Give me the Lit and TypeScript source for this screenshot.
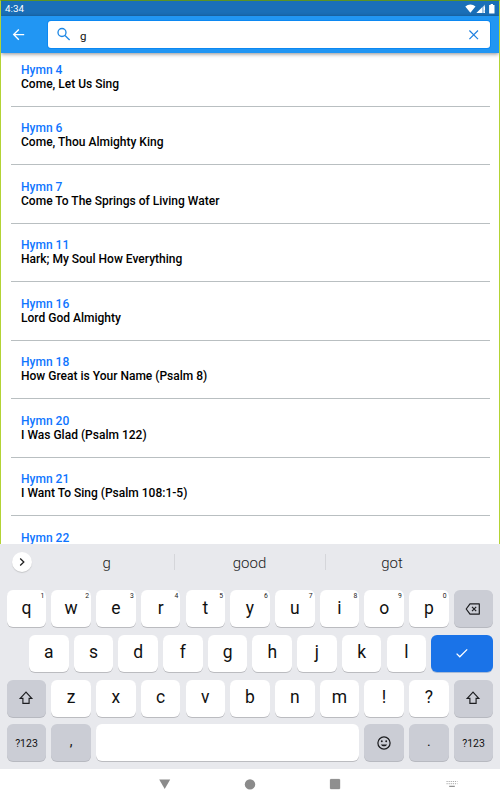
import { LitElement, html, css, svg, nothing } from "lit";
import { customElement, property } from "lit/decorators.js";
import { classMap } from "lit/directives/class-map.js";

const hymns: Array<[number, string]> = [
  [4, "Come, Let Us Sing"],
  [6, "Come, Thou Almighty King"],
  [7, "Come To The Springs of Living Water"],
  [11, "Hark; My Soul How Everything"],
  [16, "Lord God Almighty"],
  [18, "How Great is Your Name (Psalm 8)"],
  [20, "I Was Glad (Psalm 122)"],
  [21, "I Want To Sing (Psalm 108:1-5)"],
  [22, ""],
];

const shiftIcon = svg`<svg width="16" height="16" viewBox="0 0 16 16" fill="none" stroke="#1c1d20" stroke-width="1.15"><path d="M8 2.2 2.2 8.3H4.9v5.1h6.2V8.3h2.7z"/></svg>`;
const deleteIcon = svg`<svg width="16" height="16" viewBox="0 0 16 16" fill="none" stroke="#1c1d20" stroke-width="1.2"><path d="M5 2.9h9.3v10.2H5L1.2 8z" stroke-linejoin="round"/><path d="m7 5.9 4.2 4.2m0-4.2L7 10.1"/></svg>`;
const doneIcon = svg`<svg width="16" height="16" viewBox="0 0 16 16" fill="none" stroke="#fff" stroke-width="1.3"><path d="m2.6 8.6 3.2 3.2 7.4-7.4"/></svg>`;
const smileIcon = svg`<svg width="16" height="16" viewBox="0 0 16 16" fill="none" stroke="#1c1d20" stroke-width="1.25"><circle cx="8" cy="8" r="6.1"/><path d="M4.9 9.4c1.2 2.5 5 2.5 6.2 0z" fill="#1c1d20" stroke="none"/><circle cx="5.8" cy="6.3" r=".95" fill="#1c1d20" stroke="none"/><circle cx="10.2" cy="6.3" r=".95" fill="#1c1d20" stroke="none"/></svg>`;

@customElement("key-cap")
class KeyCap extends LitElement {
  @property() label = "";
  @property() hint = "";
  @property() icon = "";
  static styles = css`
    :host {
      position: relative;
      display: flex;
      align-items: center;
      justify-content: center;
      box-sizing: border-box;
      height: 37px;
      border-radius: 6px;
      background: #fff;
      box-shadow: 0 1px 0 #bbbcc0;
      color: #111;
      font: 400 17.5px/20px Roboto, sans-serif;
    }
    :host([dark]) { background: #cbcdd5; box-shadow: 0 1px 0 #b7b9c0; }
    :host([done]) { background: #1a73e8; box-shadow: 0 1px 0 #a9bbd6; }
    .label { margin-top: -2px; }
    .mark { font-size: 14px; margin-top: -4px; }
    .small { font-size: 10.5px; margin-top: 2px; }
    .hint { position: absolute; right: 2px; top: 1.5px; font-size: 6.8px; line-height: 8px; color: #222; }
    svg { display: block; margin-right: 1px; }
  `;
  render() {
    const icons: Record<string, unknown> = { shift: shiftIcon, del: deleteIcon, done: doneIcon, smile: smileIcon };
    const mark = this.label === "," || this.label === ".";
    return html`
      ${this.icon ? icons[this.icon] : html`<span class=${classMap({ label: this.label.length === 1 && !mark, mark, small: this.label.length > 1 })}>${this.label}</span>`}
      ${this.hint ? html`<span class="hint">${this.hint}</span>` : nothing}
    `;
  }
}

@customElement("soft-keyboard")
class SoftKeyboard extends LitElement {
  static styles = css`
    :host { display: block; height: 225px; background: #e8e9ed; font-family: Roboto, sans-serif; }
    .suggestions { height: 46px; display: flex; align-items: flex-start; padding: 0 37px 0 12px; box-sizing: border-box; }
    .more { width: 20px; height: 20px; margin-top: 8px; border-radius: 50%; background: #fff; box-shadow: 0 1px 1px #c6c7ca; display: flex; align-items: center; justify-content: center; }
    .word { margin-top: 9px; text-align: center; font: 300 15px/20px Roboto, sans-serif; color: #222; }
    .first { flex: 0 0 141.5px; box-sizing: border-box; padding-left: 8px; }
    .second { flex: 0 0 150px; }
    .third { flex: 0 0 133px; }
    .bar { width: 1px; height: 16px; margin-top: 10px; background: #d5d6da; }
    .keys { display: flex; flex-direction: column; row-gap: 7.8px; padding: 0 6.7px; }
    .row { display: flex; gap: 5.1px; height: 37px; }
    key-cap { flex: 1 1 0; }
    .second-row { padding-left: 22.35px; }
    .second-row key-cap, .last-row key-cap { flex: 0 0 39.6px; }
    .second-row .enter, .last-row .space { flex: 1 1 0; }
  `;
  render() {
    return html`
      <div class="suggestions">
        <div class="more"><svg width="12" height="12" viewBox="0 0 12 12" fill="none" stroke="#222" stroke-width="1.3"><path d="m4.2 2.5 3.6 3.5-3.6 3.5"/></svg></div>
        <div class="word first">g</div>
        <div class="bar"></div>
        <div class="word second">good</div>
        <div class="bar"></div>
        <div class="word third">got</div>
      </div>
      <div class="keys">
        <div class="row">
          ${[..."qwertyuiop"].map((k, i) => html`<key-cap label=${k} hint=${String((i + 1) % 10)}></key-cap>`)}
          <key-cap dark icon="del"></key-cap>
        </div>
        <div class="row second-row">
          ${[..."asdfghjkl"].map((k) => html`<key-cap label=${k}></key-cap>`)}
          <key-cap class="enter" done icon="done"></key-cap>
        </div>
        <div class="row">
          <key-cap dark icon="shift"></key-cap>
          ${[..."zxcvbnm!?"].map((k) => html`<key-cap label=${k}></key-cap>`)}
          <key-cap dark icon="shift"></key-cap>
        </div>
        <div class="row last-row">
          <key-cap dark label="?123"></key-cap>
          <key-cap dark label=","></key-cap>
          <key-cap class="space"></key-cap>
          <key-cap dark icon="smile"></key-cap>
          <key-cap dark label="."></key-cap>
          <key-cap dark label="?123"></key-cap>
        </div>
      </div>
    `;
  }
}

@customElement("app-root")
class AppRoot extends LitElement {
  static styles = css`
    :host { display: flex; flex-direction: column; width: 500px; height: 800px; overflow: hidden; background: #fff; font-family: Roboto, sans-serif; }
    .app { height: 544px; box-sizing: border-box; border: 1px solid #b3d335; border-top-color: #5b9324; border-bottom: 0; display: flex; flex-direction: column; overflow: hidden; }
    .status { flex: none; height: 15px; background: #1a6fb8; color: #fff; display: flex; align-items: center; justify-content: space-between; padding: 0 3px 0 4px; font-size: 9.8px; line-height: 14px; }
    .status svg { display: block; }
    .header { flex: none; height: 37px; background: #2196f3; display: flex; align-items: center; box-sizing: border-box; padding: 0 9.5px 0 10px; box-shadow: 0 1px 4px rgba(0, 0, 0, .45); z-index: 1; }
    .back { width: 16px; margin-right: 21px; display: block; }
    .field { flex: 1; height: 27px; box-sizing: border-box; background: #fff; border-radius: 3px; display: flex; align-items: center; padding: 0 9px; box-shadow: 0 0 0 1px #0c88f2; }
    .query { flex: 1; margin-left: 8px; font-size: 11.5px; line-height: 14px; color: #111; padding-top: 2px; }
    .list { flex: 1; min-height: 0; overflow: hidden; padding: 0 9.5px; margin-top: -5px; }
    .item { height: 58.5px; box-sizing: border-box; border-bottom: 1px solid #b9bfc1; padding: 14.7px 0 0 10.5px; font-size: 12.03px; line-height: 14px; font-weight: 500; color: #000; white-space: nowrap; }
    .number { color: #0f75ff; }
    .nav { flex: 1; display: flex; align-items: center; padding: 0 42px 2px 158px; }
    .nav svg { display: block; }
    .circle { margin-left: 71px; }
    .square { margin-left: 71px; }
    .board { margin-left: auto; }
  `;
  render() {
    return html`
      <div class="app">
        <div class="status">
          <span>4:34</span>
          <svg width="31" height="12" viewBox="0 0 31 12" fill="#fff">
            <path d="M.3 3.6C3.4.9 7.4.9 10.5 3.6L5.4 9.8z"/>
            <path d="M20 1.5v8.5h-8.5z" fill-opacity=".6"/><path d="M17 4.5V10h-5.5z"/><path d="M18.7 3.5h1.3v4h-1.3zM18.7 8.6h1.3V10h-1.3z"/>
            <path d="M25.6 1.1h2.4v1h1.5v8.3h-5.4V2.1h1.5z"/>
          </svg>
        </div>
        <div class="header">
          <svg class="back" width="16" height="16" viewBox="0 0 16 16" fill="none" stroke="#fff" stroke-width="1.35"><path d="M13.2 7.6H2.6M7.8 2.5 2.7 7.6l5.1 5.1"/></svg>
          <div class="field">
            <svg width="15" height="15" viewBox="0 0 15 15" fill="none" stroke="#1e88e5" stroke-width="1.35"><circle cx="5" cy="5.5" r="4"/><path d="m8 8.5 4.6 4.5"/></svg>
            <span class="query">g</span>
            <svg width="14" height="14" viewBox="0 0 14 14" fill="none" stroke="#1e80e0" stroke-width="1.2"><path d="m2.4 2.5 8.6 8.6m0-8.6-8.6 8.6"/></svg>
          </div>
        </div>
        <div class="list">
          ${hymns.map(([n, title]) => html`<div class="item"><div class="number">Hymn ${n}</div><div>${title}</div></div>`)}
        </div>
      </div>
      <soft-keyboard></soft-keyboard>
      <div class="nav">
        <svg width="13" height="12" viewBox="0 0 13 12" fill="#8b8b8b"><path d="M1.2 1.4h11L6.7 11z"/></svg>
        <svg class="circle" width="16" height="12" viewBox="0 0 16 12" fill="#8b8b8b"><circle cx="8" cy="6.4" r="5.2"/></svg>
        <svg class="square" width="12" height="12" viewBox="0 0 12 12" fill="#8f8f8f" stroke="#7c7c7c" stroke-width=".8"><rect x="1.4" y="1.4" width="9.3" height="9.3" rx=".3"/></svg>
        <svg class="board" width="12" height="8" viewBox="0 0 12 8" fill="none" stroke="#aaa" stroke-width="1"><path d="M.5 1.5h11M.5 3.7h11" stroke-dasharray="1.2 .9"/><path d="M3.2 6.3h5.6" stroke="#777"/></svg>
      </div>
    `;
  }
}
